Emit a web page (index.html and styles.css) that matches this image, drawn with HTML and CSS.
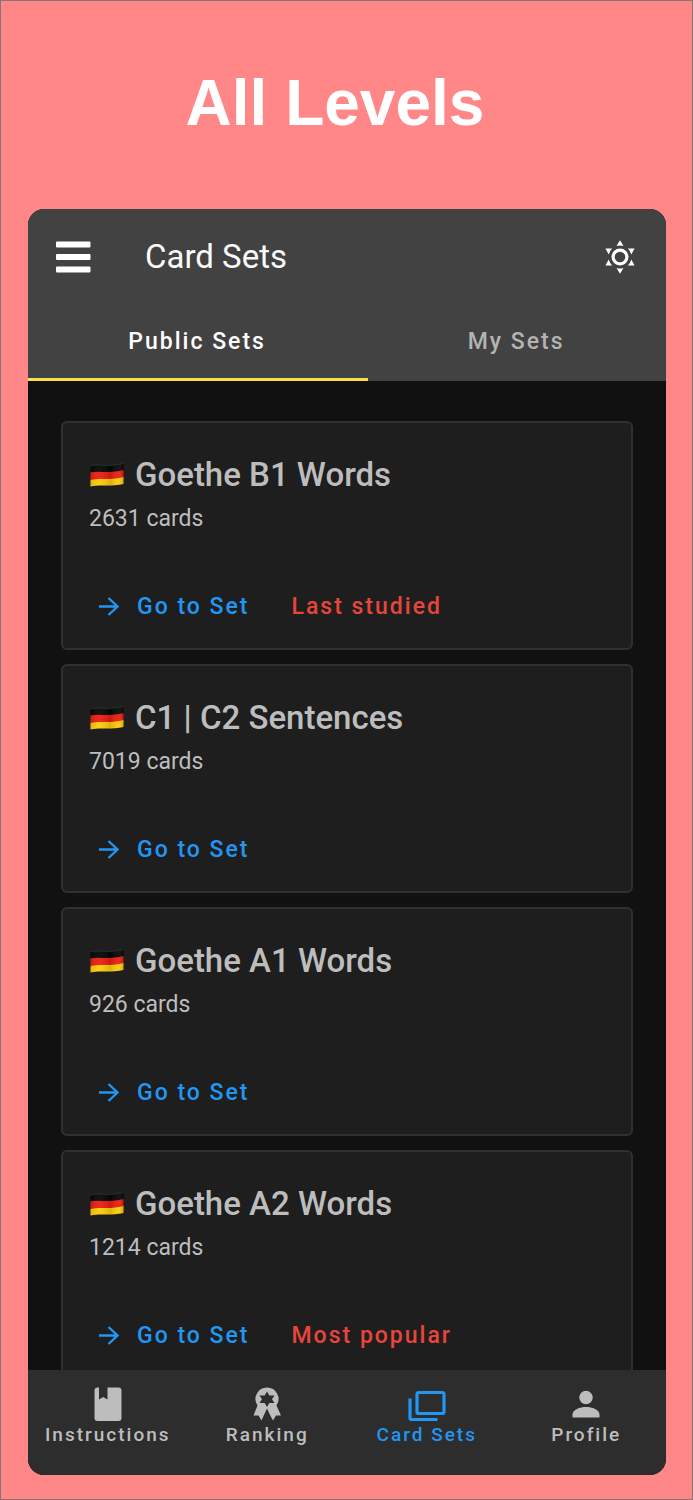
FILE: index.html
```html
<!DOCTYPE html>
<html lang="en">
<head>
<meta charset="utf-8">
<meta name="viewport" content="width=device-width, initial-scale=1">
<title>All Levels</title>
<link rel="stylesheet" href="styles.css">
</head>
<body>
<svg width="0" height="0" class="defs" aria-hidden="true">
  <defs>
    <linearGradient id="shine" x1="0" y1="0" x2="1" y2="0">
      <stop offset="0" stop-color="#000" stop-opacity="0.1"/>
      <stop offset="0.25" stop-color="#fff" stop-opacity="0.06"/>
      <stop offset="0.6" stop-color="#000" stop-opacity="0.12"/>
      <stop offset="0.85" stop-color="#fff" stop-opacity="0.06"/>
      <stop offset="1" stop-color="#000" stop-opacity="0.2"/>
    </linearGradient>
    <symbol id="flag-de" viewBox="0 0 34 24">
      <path fill="#050505" d="M0.500 3C7 1 12 2.500 17 2.500S28 1.500 33.500 0.500V9H0.500z"/>
      <path fill="#ea1c10" d="M0.500 9.500C7 8 12 9 17 9S28 8.500 33.500 7V17H0.500z"/>
      <path fill="#fccb0a" d="M0.500 17C7 15.500 12 16 17 16S28 15.500 33.500 14V21C28 22.500 22 22.500 17 22.500S7 22 0.500 23.500z"/>
      <path fill="url(#shine)" d="M0.500 3C7 1 12 2.500 17 2.500S28 1.500 33.500 0.500V21C28 22.500 22 22.500 17 22.500S7 22 0.500 23.500z"/>
      <path fill="none" stroke="#2c4a2a" stroke-width="0.6" d="M0.500 3C7 1 12 2.500 17 2.500S28 1.500 33.500 0.500"/>
    </symbol>
    <symbol id="arrow" viewBox="0 0 20 20">
      <path fill="none" stroke="currentColor" stroke-width="2.4" d="M0 9.500H18M9.500 1L18.500 9.500L9.500 18"/>
    </symbol>
  </defs>
</svg>
<div class="poster">
  <h1 class="headline">All Levels</h1>
  <div class="app">
    <header class="app-header">
      <div class="topbar">
        <button class="icon-button" aria-label="Menu">
          <svg width="36" height="32" viewBox="0 0 36 32" fill="#fff"><rect x="1" y="0.5" width="34.5" height="6" rx="1"/><rect x="1" y="13" width="34.5" height="6" rx="1"/><rect x="1" y="25.5" width="34.5" height="6" rx="1"/></svg>
        </button>
        <h2 class="screen-title">Card Sets</h2>
        <button class="icon-button" aria-label="Toggle theme">
          <svg width="32" height="34" viewBox="-16 -17 32 34" fill="#fff">
            <circle r="6.900" fill="none" stroke="#fff" stroke-width="3.200"/>
            <path id="ray" d="M0 -16.800L3.500 -11Q0 -12 -3.500 -11z"/>
            <use href="#ray" transform="rotate(60)"/><use href="#ray" transform="rotate(120)"/><use href="#ray" transform="rotate(180)"/><use href="#ray" transform="rotate(240)"/><use href="#ray" transform="rotate(300)"/>
          </svg>
        </button>
      </div>
      <div class="tabs" role="tablist">
        <button class="tab tab-active" role="tab" aria-selected="true">Public Sets</button>
        <button class="tab" role="tab" aria-selected="false">My Sets</button>
      </div>
    </header>
    <main class="sets">
      <article class="card">
        <h3 class="card-title"><svg class="flag" role="img" aria-label="Germany"><use href="#flag-de"/></svg>Goethe B1 Words</h3>
        <p class="card-count">2631 cards</p>
        <div class="card-actions"><a class="go" href="#b1"><svg class="arrow" aria-hidden="true"><use href="#arrow"/></svg>Go to Set</a><span class="note">Last studied</span></div>
      </article>
      <article class="card">
        <h3 class="card-title"><svg class="flag" role="img" aria-label="Germany"><use href="#flag-de"/></svg>C1 | C2 Sentences</h3>
        <p class="card-count">7019 cards</p>
        <div class="card-actions"><a class="go" href="#c1"><svg class="arrow" aria-hidden="true"><use href="#arrow"/></svg>Go to Set</a></div>
      </article>
      <article class="card">
        <h3 class="card-title"><svg class="flag" role="img" aria-label="Germany"><use href="#flag-de"/></svg>Goethe A1 Words</h3>
        <p class="card-count">926 cards</p>
        <div class="card-actions"><a class="go" href="#a1"><svg class="arrow" aria-hidden="true"><use href="#arrow"/></svg>Go to Set</a></div>
      </article>
      <article class="card">
        <h3 class="card-title"><svg class="flag" role="img" aria-label="Germany"><use href="#flag-de"/></svg>Goethe A2 Words</h3>
        <p class="card-count">1214 cards</p>
        <div class="card-actions"><a class="go" href="#a2"><svg class="arrow" aria-hidden="true"><use href="#arrow"/></svg>Go to Set</a><span class="note">Most popular</span></div>
      </article>
    </main>
    <nav class="bottom-nav">
      <a class="nav-item" href="#instructions">
        <svg width="36" height="36" viewBox="0 0 36 36" fill="currentColor"><path d="M7.500 1.500H9V13.500L13.200 11L17.500 13.500V1.500H28.500Q31.500 1.500 31.500 4.500V32Q31.500 35 28.500 35H7.500Q4.500 35 4.500 32V4.500Q4.500 1.500 7.500 1.500z"/></svg>
        Instructions
      </a>
      <a class="nav-item" href="#ranking">
        <svg width="36" height="36" viewBox="0 0 36 36" fill="currentColor"><path fill-rule="evenodd" d="M18 1.500A11.500 11.500 0 0 1 27.500 19.500L32 29.500L27 29.500L24 34.500L21 29L18 22.500L15 29L12.500 34.500L9.500 29.500L4.500 29.500L8.500 19.500A11.500 11.500 0 0 1 18 1.500zM18 5.500L15.700 9.500L10.500 9.500L13 13.300L10.500 17.100L15.700 17.100L18 21L20.300 17.100L25.500 17.100L23 13.300L25.500 9.500L20.300 9.500z"/></svg>
        Ranking
      </a>
      <a class="nav-item nav-current" href="#sets" aria-current="page">
        <svg width="38" height="36" viewBox="0 0 38 36" fill="none" stroke="currentColor" stroke-width="3.200"><rect x="9" y="6.500" width="27" height="21" rx="1.800"/><path d="M2 12.500V32Q2 33.500 3.500 33.500H29.500"/></svg>
        Card Sets
      </a>
      <a class="nav-item" href="#profile">
        <svg width="36" height="36" viewBox="0 0 36 36" fill="currentColor"><circle cx="18" cy="11.500" r="6.700"/><path d="M4.500 31.500V28.500C4.500 23.500 12 21 18 21S31.500 23.500 31.500 28.500V31.500z"/></svg>
        Profile
      </a>
    </nav>
  </div>
</div>
</body>
</html>
```
FILE: styles.css
```css
* { box-sizing: border-box; }

body {
  margin: 0;
  font-family: Roboto, "Noto Sans", sans-serif;
}

h1, h2, h3, p { margin: 0; }

button {
  padding: 0;
  border: 0;
  background: none;
  font: inherit;
  color: inherit;
}

a { text-decoration: none; color: inherit; }
svg { display: block; flex: none; }
.defs { position: absolute; }

.poster {
  display: flex;
  flex-direction: column;
  height: 100vh;
  padding: 0 26px 24px 27px;
  border: 1px solid #857676;
  background: #ff8787;
}

.headline {
  padding: 62px 24px 66px 0;
  font: bold 64px/80px "Liberation Sans", Arial, sans-serif;
  text-align: center;
  color: #fff;
}

.app {
  display: flex;
  flex: 1;
  flex-direction: column;
  min-height: 0;
  overflow: hidden;
  border-radius: 16px;
  background: #111;
}

.app-header { background: #424242; color: #fafafa; }

.topbar {
  display: flex;
  align-items: center;
  height: 96px;
  padding: 0 30px 0 27px;
}

.screen-title {
  flex: 1;
  padding-left: 54px;
  font-size: 33px;
  font-weight: 400;
  line-height: 40px;
}

.tabs {
  display: grid;
  grid-template-columns: 8fr 7fr;
  height: 76px;
}

.tab {
  padding: 0 2px 0 0;
  border-bottom: 3px solid transparent;
  font-size: 23px;
  font-weight: 500;
  letter-spacing: 2px;
  color: #b3b3b3;
}

.tab-active { border-color: #fbdf4b; color: #fff; }

.sets {
  display: flex;
  flex: 1;
  flex-direction: column;
  gap: 14px;
  min-height: 0;
  padding: 40px 33px 0;
  overflow: hidden;
}

.card {
  flex: none;
  padding: 28px 26px 21px;
  border: 2px solid #303030;
  border-radius: 6px;
  background: #1e1e1e;
  color: #bdbdbd;
}

.card-title {
  display: flex;
  align-items: center;
  gap: 10px;
  font-size: 33px;
  font-weight: 500;
  line-height: 48px;
}

.flag { width: 36px; height: 24px; }

.card-count {
  padding-top: 4px;
  font-size: 23px;
  line-height: 32px;
}

.card-actions {
  display: flex;
  gap: 42px;
  padding: 52px 10px 0;
  font-size: 23px;
  font-weight: 500;
  line-height: 40px;
  letter-spacing: 2px;
}

.go {
  display: flex;
  align-items: center;
  gap: 18px;
  color: #2196f3;
}

.arrow { width: 20px; height: 20px; }
.note { color: #e8453c; }

.bottom-nav {
  display: grid;
  grid-template-columns: repeat(4, 1fr);
  padding: 16px 0 27px;
  background: #2d2d2d;
  color: #bdbdbd;
}

.nav-item {
  display: flex;
  flex-direction: column;
  align-items: center;
  font-size: 19px;
  font-weight: 500;
  line-height: 26px;
  letter-spacing: 2px;
}

.nav-current { color: #2196f3; }
```
